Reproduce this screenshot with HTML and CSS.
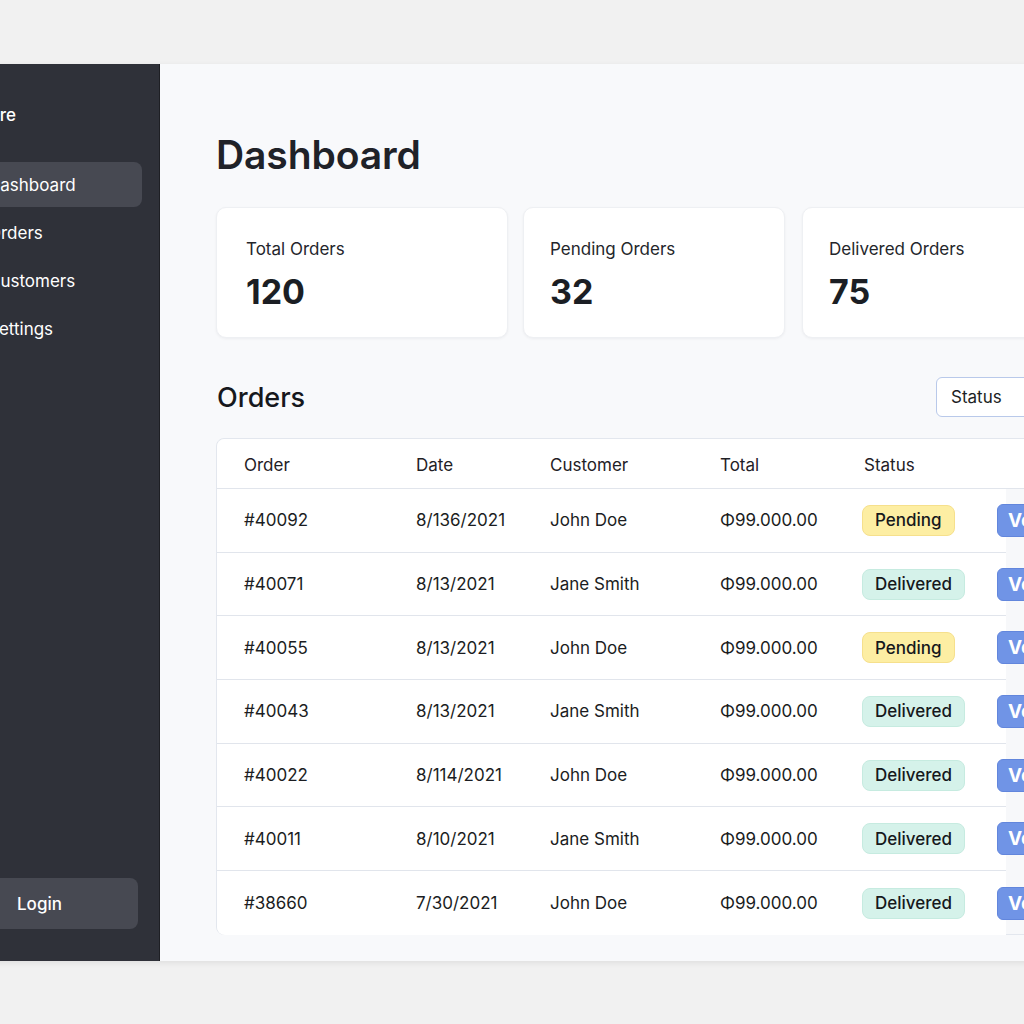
FILE: index.html
```html
<!DOCTYPE html>
<html lang="en">
<head>
<meta charset="utf-8">
<title>Dashboard</title>
<link rel="stylesheet" href="styles.css">
</head>
<body>
<div class="app">
  <aside class="sidebar">
    <div class="brand">Store</div>
    <nav class="nav">
      <a class="nav-item active">Dashboard</a>
      <a class="nav-item">Orders</a>
      <a class="nav-item">Customers</a>
      <a class="nav-item">Settings</a>
    </nav>
    <button class="login">Login</button>
  </aside>
  <main class="main">
    <h1 class="title">Dashboard</h1>
    <section class="stats">
      <div class="stat first"><div class="stat-label">Total Orders</div><div class="stat-value">120</div></div>
      <div class="stat"><div class="stat-label">Pending Orders</div><div class="stat-value">32</div></div>
      <div class="stat"><div class="stat-label">Delivered Orders</div><div class="stat-value">75</div></div>
    </section>
    <div class="section-head">
      <h2 class="section-title">Orders</h2>
      <div class="select">Status</div>
    </div>
    <section class="table">
      <div class="thead">
        <div>Order</div><div>Date</div><div>Customer</div><div>Total</div><div class="th-status">Status</div>
      </div>
      <div class="tbody">
        <div class="row"><div>#40092</div><div>8/136/2021</div><div>John Doe</div><div>Φ99.000.00</div><div><span class="badge pending">Pending</span></div><div><span class="view">Ver</span></div></div>
        <div class="row"><div>#40071</div><div>8/13/2021</div><div>Jane Smith</div><div>Φ99.000.00</div><div><span class="badge delivered">Delivered</span></div><div><span class="view">Ver</span></div></div>
        <div class="row"><div>#40055</div><div>8/13/2021</div><div>John Doe</div><div>Φ99.000.00</div><div><span class="badge pending">Pending</span></div><div><span class="view">Ver</span></div></div>
        <div class="row"><div>#40043</div><div>8/13/2021</div><div>Jane Smith</div><div>Φ99.000.00</div><div><span class="badge delivered">Delivered</span></div><div><span class="view">Ver</span></div></div>
        <div class="row"><div>#40022</div><div>8/114/2021</div><div>John Doe</div><div>Φ99.000.00</div><div><span class="badge delivered">Delivered</span></div><div><span class="view">Ver</span></div></div>
        <div class="row"><div>#40011</div><div>8/10/2021</div><div>Jane Smith</div><div>Φ99.000.00</div><div><span class="badge delivered">Delivered</span></div><div><span class="view">Ver</span></div></div>
        <div class="row last"><div>#38660</div><div>7/30/2021</div><div>John Doe</div><div>Φ99.000.00</div><div><span class="badge delivered">Delivered</span></div><div><span class="view">Ver</span></div></div>
      </div>
    </section>
  </main>
</div>
</body>
</html>
```

FILE: styles.css
```css
* { box-sizing: border-box; }
html, body {
  margin: 0;
  padding: 0;
  overflow: hidden;
  width: 1024px;
  height: 1024px;
}
body {
  background: #f1f1f1;
  font-family: Inter, "Noto Sans", sans-serif;
  color: #1d1f24;
  padding-top: 64px;
}
.app {
  display: flex;
  width: 1200px;
  height: 897px;
  margin-left: -40px;
  background: #f8f9fb;
  box-shadow: 0 2px 6px rgba(0,0,0,0.08);
}
.sidebar {
  width: 200px;
  flex: none;
  background: #2f3139;
  border-right: 1px solid #1e1f24;
  display: flex;
  flex-direction: column;
  padding: 39px 17px 32px 13px;
  color: #ffffff;
}
.brand {
  font-size: 17px;
  font-weight: 500;
  line-height: 24px;
  margin-bottom: 35px;
}
.nav {
  display: flex;
  flex-direction: column;
  gap: 3px;
}
.nav-item {
  display: flex;
  align-items: center;
  height: 45px;
  padding-left: 15px;
  border-radius: 8px;
  font-size: 17px;
  color: #ffffff;
}
.nav-item.active {
  background: #474952;
}
.login {
  margin-top: auto;
  margin-right: 4px;
  height: 51px;
  border: none;
  border-radius: 8px;
  background: #474952;
  color: #ffffff;
  font-family: inherit;
  font-size: 17px;
  font-weight: 500;
  text-align: left;
  padding-left: 44px;
}
.main {
  flex: 1;
  padding: 67px 0 0 56px;
}
.title {
  margin: 0 0 28px;
  font-size: 39px;
  line-height: 48px;
  font-weight: 600;
  color: #1f2228;
  letter-spacing: -0.1px;
}
.stats {
  display: grid;
  grid-template-columns: 292px 262px 262px;
  column-gap: 15px;
}
.stats .stat:nth-child(3) { margin-left: 2px; }
.stat {
  height: 131px;
  background: #ffffff;
  border: 1px solid #eef0f3;
  border-radius: 10px;
  box-shadow: 0 1px 3px rgba(20,25,40,0.05);
  padding: 29px 0 0 26px;
}
.stat.first { padding-left: 29px; }
.stat-label {
  font-size: 17px;
  line-height: 24px;
  color: #24262b;
}
.stat-value {
  margin-top: 11px;
  font-size: 34px;
  line-height: 40px;
  font-weight: 700;
  color: #1b1e24;
}
.section-head {
  display: flex;
  align-items: center;
  justify-content: space-between;
  width: 840px;
  margin-top: 39px;
  height: 40px;
}
.section-title {
  margin: 0;
  font-size: 27px;
  font-weight: 500;
  color: #16181d;
  padding-left: 1px;
}
.select {
  width: 120px;
  height: 40px;
  border: 1px solid #b9c9ea;
  border-radius: 6px;
  background: #ffffff;
  display: flex;
  align-items: center;
  padding-left: 14px;
  font-size: 17px;
  color: #1d1f24;
}
.table {
  margin-top: 21px;
  width: 900px;
  height: 497px;
  background: #f7f8fa;
  border: 1px solid #e3e7ee;
  border-radius: 8px 0 0 8px;
}
.thead, .row {
  display: grid;
  grid-template-columns: 172px 134px 170px 142px 135px auto;
  align-items: center;
  padding-left: 27px;
  font-size: 17px;
}
.thead {
  height: 50px;
  padding-top: 3px;
  background: #ffffff;
  border-bottom: 1px solid #e1e5ec;
  border-radius: 8px 0 0 0;
  color: #1f2126;
}
.th-status { padding-left: 2px; }
.tbody {
  width: 789px;
}
.row {
  height: 63.7px;
  background: #ffffff;
  border-bottom: 1px solid #e1e5ec;
  color: #1b1d22;
}
.row.last {
  border-bottom: none;
  border-radius: 0 0 0 8px;
  height: 64px;
}
.badge {
  display: inline-flex;
  align-items: center;
  height: 31px;
  padding: 0 12px;
  border-radius: 8px;
  font-size: 17px;
  font-weight: 500;
  color: #16181c;
}
.badge.pending {
  background: #fdeea3;
  border: 1px solid #f6e08c;
}
.badge.delivered {
  background: #d5f2ea;
  border: 1px solid #c6ebe0;
}
.view {
  display: inline-flex;
  align-items: center;
  height: 33px;
  padding: 0 10px;
  border-radius: 6px;
  background: #7094e6;
  border: 1px solid #6286dc;
  color: #ffffff;
  font-size: 19px;
  font-weight: 700;
}
```
